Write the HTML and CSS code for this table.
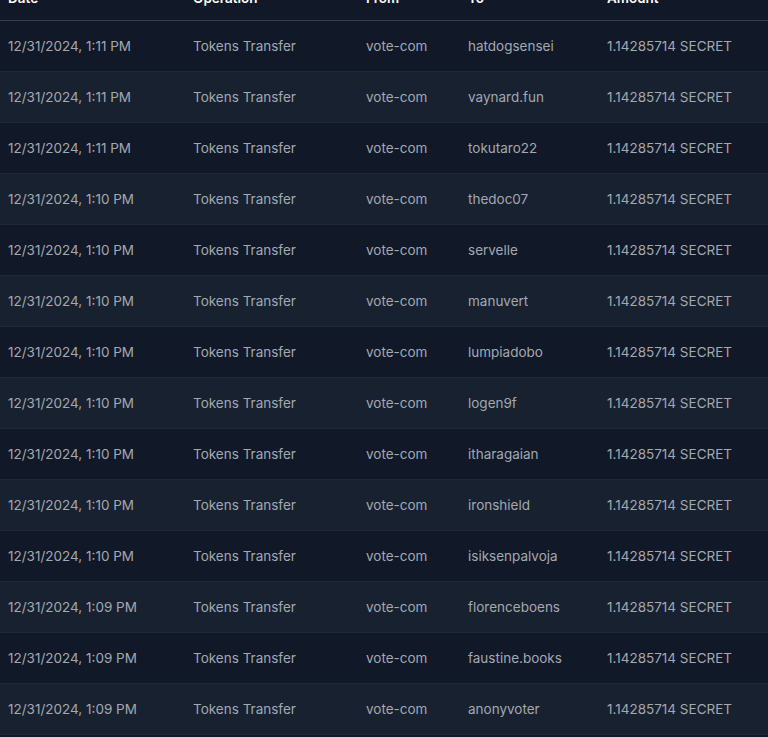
FILE: index.html
```html
<!DOCTYPE html>
<html lang="en">
<head>
  <meta charset="UTF-8">
  <title>Transfers</title>
  <link rel="stylesheet" href="styles.css">
</head>
<body>
  <div class="wrap">
    <table class="tx">
      <thead>
        <tr>
          <th class="c-date">Date</th>
          <th class="c-op">Operation</th>
          <th class="c-from">From</th>
          <th class="c-to">To</th>
          <th class="c-amt">Amount</th>
        </tr>
      </thead>
      <tbody>
        <tr><td>12/31/2024, 1:11 PM</td><td>Tokens Transfer</td><td>vote-com</td><td>hatdogsensei</td><td>1.14285714 SECRET</td></tr>
        <tr><td>12/31/2024, 1:11 PM</td><td>Tokens Transfer</td><td>vote-com</td><td>vaynard.fun</td><td>1.14285714 SECRET</td></tr>
        <tr><td>12/31/2024, 1:11 PM</td><td>Tokens Transfer</td><td>vote-com</td><td>tokutaro22</td><td>1.14285714 SECRET</td></tr>
        <tr><td>12/31/2024, 1:10 PM</td><td>Tokens Transfer</td><td>vote-com</td><td>thedoc07</td><td>1.14285714 SECRET</td></tr>
        <tr><td>12/31/2024, 1:10 PM</td><td>Tokens Transfer</td><td>vote-com</td><td>servelle</td><td>1.14285714 SECRET</td></tr>
        <tr><td>12/31/2024, 1:10 PM</td><td>Tokens Transfer</td><td>vote-com</td><td>manuvert</td><td>1.14285714 SECRET</td></tr>
        <tr><td>12/31/2024, 1:10 PM</td><td>Tokens Transfer</td><td>vote-com</td><td>lumpiadobo</td><td>1.14285714 SECRET</td></tr>
        <tr><td>12/31/2024, 1:10 PM</td><td>Tokens Transfer</td><td>vote-com</td><td>logen9f</td><td>1.14285714 SECRET</td></tr>
        <tr><td>12/31/2024, 1:10 PM</td><td>Tokens Transfer</td><td>vote-com</td><td>itharagaian</td><td>1.14285714 SECRET</td></tr>
        <tr><td>12/31/2024, 1:10 PM</td><td>Tokens Transfer</td><td>vote-com</td><td>ironshield</td><td>1.14285714 SECRET</td></tr>
        <tr><td>12/31/2024, 1:10 PM</td><td>Tokens Transfer</td><td>vote-com</td><td>isiksenpalvoja</td><td>1.14285714 SECRET</td></tr>
        <tr><td>12/31/2024, 1:09 PM</td><td>Tokens Transfer</td><td>vote-com</td><td>florenceboens</td><td>1.14285714 SECRET</td></tr>
        <tr><td>12/31/2024, 1:09 PM</td><td>Tokens Transfer</td><td>vote-com</td><td>faustine.books</td><td>1.14285714 SECRET</td></tr>
        <tr><td>12/31/2024, 1:09 PM</td><td>Tokens Transfer</td><td>vote-com</td><td>anonyvoter</td><td>1.14285714 SECRET</td></tr>
        <tr><td>12/31/2024, 1:09 PM</td><td>Tokens Transfer</td><td>vote-com</td><td>cryptobelle</td><td>1.14285714 SECRET</td></tr>
      </tbody>
    </table>
  </div>
</body>
</html>
```

FILE: styles.css
```css
html, body { margin: 0; background: #111827; }
body { font-family: Inter, "Noto Sans", sans-serif; font-size: 13.5px; line-height: 20px; overflow: hidden; }
.wrap { margin-top: -24px; }
.tx { width: 768px; border-collapse: collapse; table-layout: fixed; }
.tx th { padding: 12px 8px; text-align: left; color: #fff; font-weight: 600; border-bottom: 1px solid #374151; }
.tx td { padding: 15px 8px 15px; color: #a3a8b1; border-bottom: 1px solid #1e2838; white-space: nowrap; }
.tx tbody tr:nth-child(even) { background: #18212f; }
.c-date { width: 169px; }
.c-op { width: 157px; }
.c-from { width: 86px; }
.c-to { width: 123px; }
.c-amt { width: auto; }
```
